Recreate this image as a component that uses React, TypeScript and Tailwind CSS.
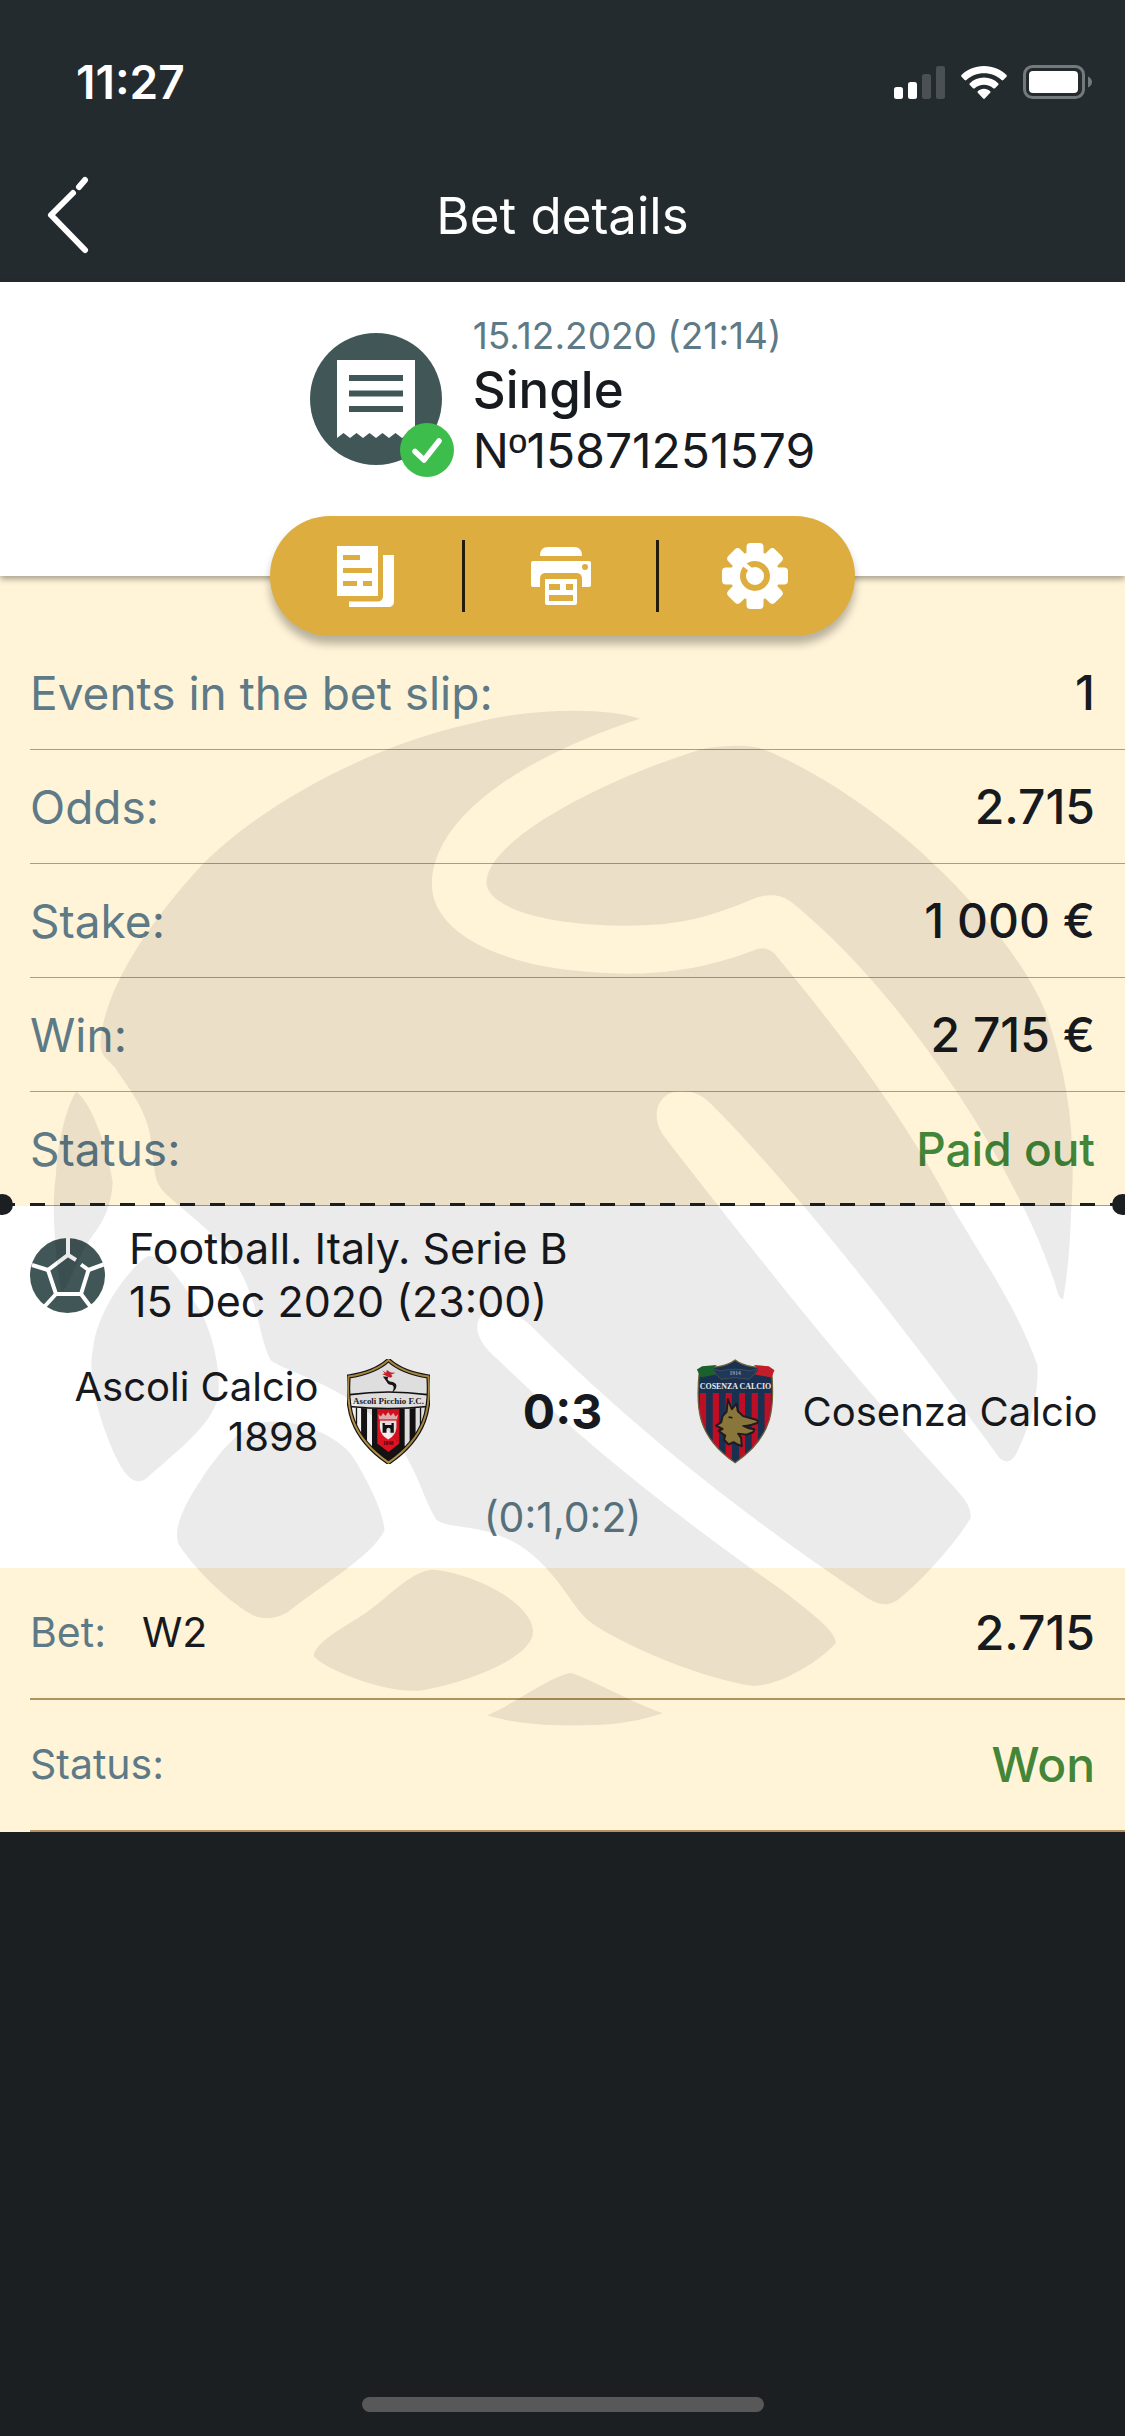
import React from "react";

const slipRows = [
  { label: "Events in the bet slip:", value: "1" },
  { label: "Odds:", value: "2.715" },
  { label: "Stake:", value: "1 000 €" },
  { label: "Win:", value: "2 715 €" },
  { label: "Status:", value: "Paid out", positive: true },
];

function SignalIcon() {
  return (
    <svg viewBox="0 0 51 33" className="h-[33px] w-[51px]" aria-hidden="true">
      <rect x="0" y="21" width="9" height="12" rx="2.5" fill="#fff" />
      <rect x="14" y="16" width="9" height="17" rx="2.5" fill="#fff" />
      <rect x="28" y="8" width="9" height="25" rx="2.5" fill="#4a5053" />
      <rect x="42" y="0" width="9" height="33" rx="2.5" fill="#4a5053" />
    </svg>
  );
}

function WifiIcon() {
  return (
    <svg viewBox="0 0 46 33" className="h-[33px] w-[46px]" aria-hidden="true" fill="#fff">
      <path d="M23 0C32 0 40 3.500 45.500 9C46 9.500 46 10.200 45.500 10.700L42.300 14C41.800 14.500 41.100 14.500 40.600 14C36 9.800 30 7.300 23 7.300S10 9.800 5.400 14C4.900 14.500 4.200 14.500 3.700 14L.5 10.700C0 10.200 0 9.500 .5 9C6 3.500 14 0 23 0Z" />
      <path d="M23 11.500C28.500 11.500 33.500 13.600 37.200 17.200C37.700 17.700 37.700 18.400 37.200 18.900L34 22.200C33.500 22.700 32.800 22.700 32.300 22.200C29.800 20 26.600 18.700 23 18.700S16.200 20 13.700 22.200C13.200 22.700 12.500 22.700 12 22.200L8.800 18.900C8.300 18.400 8.300 17.700 8.800 17.200C12.500 13.600 17.500 11.500 23 11.500Z" />
      <path d="M23 22.800C25.500 22.800 27.600 23.700 29.200 25.200C29.700 25.700 29.700 26.300 29.200 26.800L23.800 32.500C23.300 33 22.700 33 22.200 32.500L16.800 26.800C16.300 26.300 16.300 25.700 16.800 25.200C18.400 23.700 20.500 22.800 23 22.800Z" />
    </svg>
  );
}

function BatteryIcon() {
  return (
    <svg viewBox="0 0 70 34" className="h-[34px] w-[70px]" aria-hidden="true">
      <rect x="1.500" y="1.500" width="59" height="31" rx="8" fill="none" stroke="#74797b" strokeWidth="3" />
      <rect x="6" y="6" width="49" height="22" rx="4" fill="#fff" />
      <path d="M65 11.500C67.500 12.500 69 14.500 69 17S67.500 21.500 65 22.500Z" fill="#74797b" />
    </svg>
  );
}

function ReceiptBadge() {
  return (
    <svg viewBox="0 0 144 144" className="h-[144px] w-[144px] shrink-0" aria-hidden="true">
      <circle cx="66" cy="66" r="66" fill="#415657" />
      <path d="M27 27H105V105L98.500 100L92 105L85.500 100L79 105L72.500 100L66 105L59.500 100L53 105L46.500 100L40 105L33.500 100L27 105Z" fill="#fff" />
      <path d="M39 45H93M39 60.500H93M39 76H93" stroke="#415657" strokeWidth="6" />
      <circle cx="117" cy="117" r="27" fill="#3dbd4b" />
      <path d="M105 118.500L114 127L129 108" fill="none" stroke="#fff" strokeWidth="5.500" strokeLinecap="round" strokeLinejoin="round" />
    </svg>
  );
}

function CopyIcon() {
  return (
    <svg viewBox="0 0 57 61" className="h-[61px] w-[57px]" aria-hidden="true">
      <path fill="#fff" fillRule="evenodd" d="M0 0H41V50H0ZM6 9V14H23V9ZM6 22V27H35V22ZM6 35V40H20V35ZM26 35V40H35V35Z" />
      <path fill="#fff" d="M46 9H57V55C57 59 55 61 51 61H12V55.500H40C44 55.500 46 53.500 46 49.500Z" />
    </svg>
  );
}

function PrinterIcon() {
  return (
    <svg viewBox="0 0 60 58" className="h-[58px] w-[60px]" aria-hidden="true" fill="#fff">
      <path d="M9 9C9 3 12 0 17 0H43C48 0 51 3 51 9Z" />
      <path fillRule="evenodd" d="M2 14H58Q60 14 60 16V38Q60 40 58 40H51V32C51 28 49 26 45 26H15C11 26 9 28 9 32V40H2Q0 40 0 38V16Q0 14 2 14ZM54 17A3 3 0 1 0 54 23A3 3 0 1 0 54 17Z" />
      <path fillRule="evenodd" d="M14 32H46V56Q46 58 44 58H16Q14 58 14 56ZM18 37V43H29V37ZM35 37V43H42V37ZM18 48V54H42V48Z" />
    </svg>
  );
}

function GearIcon() {
  return (
    <svg viewBox="-33 -33 66 66" className="h-[66px] w-[66px]" aria-hidden="true">
      <g fill="#fff">
        <rect x="-8.500" y="-33" width="17" height="66" rx="4" />
        <rect x="-8.500" y="-33" width="17" height="66" rx="4" transform="rotate(90)" />
        <rect x="-8.500" y="-33" width="17" height="66" rx="4" transform="rotate(45)" />
        <rect x="-8.500" y="-33" width="17" height="66" rx="4" transform="rotate(135)" />
        <circle r="24.500" />
      </g>
      <circle r="12" fill="none" stroke="#ddae3f" strokeWidth="6" />
      <path d="M-12.500 -13L-4 -6" stroke="#fff" strokeWidth="4.500" />
    </svg>
  );
}

function FootballIcon() {
  return (
    <svg viewBox="0 0 75 75" className="h-[75px] w-[75px] shrink-0" aria-hidden="true">
      <circle cx="37.500" cy="37.500" r="37.500" fill="#415657" />
      <g fill="none" stroke="#fff" strokeWidth="4">
        <path d="M38 0V17M46 22L38 17L18 32L26 56H51L58.500 32L51 26.500" />
        <path d="M18 32L2 27M58.500 32L73.500 26.500M26 56L15 68M51 56L60 68" />
      </g>
    </svg>
  );
}

function AscoliCrest() {
  const shield = "M207 89C238 118 280 132 328 139C335 230 324 320 207 400C90 320 79 230 86 139C134 132 176 118 207 89Z";
  return (
    <svg viewBox="82 86 250 318" className="h-[105px] w-[83px] shrink-0" role="img" aria-label="Ascoli Picchio F.C.">
      <clipPath id="ascoli-shield">
        <path d={shield} />
      </clipPath>
      <g clipPath="url(#ascoli-shield)">
        <rect x="82" y="86" width="250" height="318" fill="#f1f1f2" />
        <rect x="82" y="228" width="250" height="180" fill="#151213" />
        <path d="M96 232H108V300H96ZM112 234H124V330H112ZM142 236H157V350H142ZM256 236H271V350H256ZM289 234H302V330H289ZM306 232H317V300H306Z" fill="#f1f1f2" />
        <path d="M173 236H240V342L207 368L173 342Z" fill="#e01222" />
        <path d="M90 190Q207 188 324 190V232Q207 242 90 232Z" fill="#f1f1f2" />
        <path d="M90 194Q207 178 324 194M90 230Q207 242 324 230" fill="none" stroke="#151213" strokeWidth="5" />
        <path d="M181 272H231V295Q228 318 206 330Q184 318 181 295Z" fill="#f6eeee" />
        <path d="M178 270L175 252L184 259L190 248L198 257L206 245L214 257L222 248L228 259L237 252L234 270Z" fill="#f3b8b8" stroke="#e01222" strokeWidth="2" />
        <path d="M189 280H196V286H216V280H223V309H213V298Q207 291 201 298V309H189Z" fill="#151213" />
        <text x="206" y="348" textAnchor="middle" fontFamily="Liberation Serif, serif" fontWeight="700" fontSize="16" fill="#3a0508">1898</text>
      </g>
      <path d="M188 121L200 128L202 119L214 127L228 128L214 134Q224 139 212 143Q196 134 188 132L196 129Z" fill="#d8232c" />
      <path d="M190 139L207 140Q200 149 211 154Q231 156 231 168Q230 181 217 188Q228 171 218 165Q205 165 202 156Q196 147 190 139Z" fill="#1a1717" />
      <text x="207" y="221" textAnchor="middle" fontFamily="Liberation Serif, serif" fontWeight="700" fontSize="27" fill="#262223">Ascoli Picchio F.C.</text>
      <path d={shield} fill="none" stroke="#151213" strokeWidth="13" />
      <path d={shield} fill="none" stroke="#b09348" strokeWidth="6" />
    </svg>
  );
}

function CosenzaCrest() {
  const shield = "M198 89C210 98 224 105 250 109L308 118C318 230 316 320 198 400C80 320 78 230 90 118L146 109C172 105 186 98 198 89Z";
  return (
    <svg viewBox="80 86 238 318" className="h-[105px] w-[79px] shrink-0" role="img" aria-label="Cosenza Calcio">
      <clipPath id="cosenza-shield">
        <path d={shield} />
      </clipPath>
      <g clipPath="url(#cosenza-shield)">
        <rect x="80" y="86" width="238" height="318" fill="#1d3557" />
        <path d="M91 189H110V400H91ZM130 189H149V400H130ZM169 189H188V400H169ZM210 189H228V400H210ZM248 189H267V400H248ZM287 189H306V400H287Z" fill="#cc1029" />
      </g>
      <path d={shield} fill="none" stroke="#7a6a42" strokeWidth="4" />
      <path d="M82 118L98 108L142 104L130 118L140 133L94 142Z" fill="#1d6a30" />
      <path d="M317 120L300 108L255 104L268 118L258 133L308 142Z" fill="#d3202c" />
      <path d="M131 116L154 122Q198 112 242 122L265 116L256 133L240 147Q198 138 156 147L140 133Z" fill="#223c60" stroke="#56635f" strokeWidth="2" />
      <text x="198" y="136" textAnchor="middle" fontFamily="Liberation Serif, serif" fontWeight="700" fontSize="17" fill="#a7afb5">1914</text>
      <text x="199" y="177" textAnchor="middle" fontFamily="Liberation Serif, serif" fontWeight="700" fontSize="24" fill="#fff">COSENZA CALCIO</text>
      <path d="M176 208L188 238L202 221L206 244L222 259L262 270Q269 274 265 280L242 287L226 290L240 296L256 299L252 308L232 315L207 312L216 325L218 350L206 345L193 338L178 345L164 330L168 318L148 304L160 298L140 288L156 277L160 259L172 246Z" fill="#94803f" stroke="#241c20" strokeWidth="6" strokeLinejoin="round" />
      <path d="M178 262L190 264M220 289L244 287" stroke="#241c20" strokeWidth="5" />
    </svg>
  );
}

function Watermark() {
  return (
    <svg
      viewBox="0 -145 1568 1751"
      preserveAspectRatio="xMidYMin meet"
      className="pointer-events-none absolute inset-x-0 top-0 w-full"
      aria-hidden="true"
      fill="#000"
      fillOpacity="0.08"
    >
      <path d="M892 54C850 38 740 38 660 60C520 90 370 170 284 255C200 345 142 440 140 508C140 525 152 530 160 540C180 570 205 600 210 640C216 680 214 690 222 705C232 725 300 765 330 815C362 870 360 915 377 948C400 965 470 980 530 1035C580 1085 588 1140 608 1170C625 1186 690 1172 745 1222C790 1262 800 1300 830 1318C880 1350 980 1392 1050 1402C1085 1402 1140 1370 1165 1342C1165 1325 1130 1300 1095 1272C960 1178 820 1070 695 948C655 915 662 890 677 880C700 872 722 884 740 900C900 1060 1060 1180 1205 1277C1228 1293 1242 1290 1255 1279C1290 1250 1330 1205 1353 1168C1353 1150 1345 1142 1330 1125C1200 985 1060 810 925 635C905 607 918 575 945 573C965 572 978 578 990 590C1120 720 1280 930 1390 1080C1400 1095 1412 1090 1418 1075C1438 1035 1448 990 1446 955C1420 880 1375 815 1325 731C1260 612 1190 515 1080 382C1070 372 1060 372 1050 377C950 415 870 412 800 405C680 392 602 345 602 285C602 195 720 110 892 54Z" />
      <path d="M1020 92C1040 91 1052 92 1067 98C1160 135 1260 215 1300 255C1370 320 1440 410 1460 470C1490 560 1500 640 1493 740C1491 790 1489 820 1482 862C1478 866 1474 855 1470 840C1440 750 1370 610 1250 460C1190 385 1140 340 1105 311C1090 298 1070 297 1050 305C980 335 930 345 850 342C740 338 678 312 678 282C678 230 810 150 975 97Q998 92 1020 92Z" />
      <path d="M106 574C125 585 150 650 157 700C155 740 140 760 125 780C105 810 95 850 86 852C80 830 70 740 78 690C80 640 95 590 106 574Z" />
      <path d="M205 803C230 800 260 850 280 880C300 920 308 970 304 1000C295 1040 240 1080 205 1112C190 1125 175 1110 165 1090C140 1040 120 970 130 930C135 880 180 820 205 803Z" />
      <path d="M372 1034C420 1030 470 1055 490 1080C510 1110 535 1160 536 1185C520 1220 450 1260 400 1300C380 1310 365 1310 350 1302C310 1280 265 1230 249 1205C240 1180 260 1145 280 1115C300 1085 335 1035 372 1034Z" />
      <path d="M605 1240C660 1245 740 1285 743 1325C745 1360 660 1395 590 1408C540 1415 450 1378 437 1360C440 1340 480 1320 510 1300C545 1275 575 1240 605 1240Z" />
      <path d="M795 1384C815 1388 880 1425 924 1440C880 1455 840 1457 795 1457C740 1457 700 1450 679 1443C720 1425 765 1390 795 1384Z" />
    </svg>
  );
}

export default function App() {
  return (
    <div className="flex min-h-screen flex-col bg-[#1b1f22] font-['Inter','Liberation_Sans',sans-serif] text-[#171a1e]">
      <header className="bg-[#242b2e] text-white">
        <div className="flex h-[132px] items-center justify-between pt-8 pr-8 pl-19">
          <span className="text-[46px] leading-none font-semibold">11:27</span>
          <div className="flex items-center gap-4">
            <SignalIcon />
            <WifiIcon />
            <BatteryIcon />
          </div>
        </div>
        <div className="grid h-[150px] grid-cols-[1fr_auto_1fr] items-center px-11 pt-4">
          <button type="button" aria-label="Back" className="h-20 w-12">
            <svg viewBox="0 0 48 80" className="h-20 w-12" aria-hidden="true" fill="none" stroke="#fff" strokeWidth="6" strokeLinecap="round">
              <path d="M41 5L35 12" />
              <path d="M29 18L7 40L41 75" strokeLinejoin="round" />
            </svg>
          </button>
          <h1 className="text-[51px] leading-none">Bet details</h1>
        </div>
      </header>

      <main>
        <section className="relative z-[1] flex h-[294px] justify-center gap-[19px] bg-white pt-6 shadow-[0_3px_6px_rgba(0,0,0,0.35)]">
          <div className="pt-[27px]">
            <ReceiptBadge />
          </div>
          <div>
            <p className="pt-1 text-[37px] leading-[52px] text-[#5d7a86]">15.12.2020 (21:14)</p>
            <p className="text-[51px] leading-[56px] font-medium">Single</p>
            <p className="text-[48px] leading-[66px]">
              N<span className="font-['Liberation_Sans',sans-serif]">º</span>15871251579
            </p>
          </div>
        </section>

        <nav aria-label="Bet actions" className="relative z-10 -my-15 flex justify-center">
          <div className="flex h-30 w-[52%] items-center divide-x-3 divide-[#241a08] rounded-full bg-[#ddae3f] pr-1 shadow-[0_8px_9px_rgba(0,0,0,0.28)]">
            <button type="button" aria-label="Copy bet slip" className="flex h-18 flex-1 items-center justify-center">
              <CopyIcon />
            </button>
            <button type="button" aria-label="Print" className="flex h-18 flex-1 items-center justify-center">
              <PrinterIcon />
            </button>
            <button type="button" aria-label="Settings" className="flex h-18 flex-1 items-center justify-center">
              <GearIcon />
            </button>
          </div>
        </nav>

        <section className="relative overflow-hidden bg-[#fff4d8] pt-15">
          <dl className="pl-[30px]">
            {slipRows.map((row) => (
              <div key={row.label} className="flex h-[114px] items-center justify-between border-b border-[#b89c63] pt-px pr-[30px]">
                <dt className="text-[46px] text-[#5d7a86]">{row.label}</dt>
                <dd className={row.positive ? "text-[46px] font-medium text-[#438638]" : "text-[48px] font-medium"}>{row.value}</dd>
              </div>
            ))}
          </dl>

          <article className="relative bg-white pt-4 pb-[26px]">
            <div className="absolute inset-x-0 -top-[3px] h-[3px] bg-[repeating-linear-gradient(90deg,#1b1f22_0_15px,transparent_15px_30px)]" />
            <div className="absolute -top-3 -left-2 size-[21px] rounded-full bg-[#1b1f22]" />
            <div className="absolute -top-3 -right-2 size-[21px] rounded-full bg-[#1b1f22]" />
            <header className="flex items-center gap-6 pl-[30px] text-[43px] leading-[53px]">
              <FootballIcon />
              <div>
                <h2>Football. Italy. Serie B</h2>
                <p>15 Dec 2020 (23:00)</p>
              </div>
            </header>
            <div className="mt-[31px] grid grid-cols-[minmax(0,1fr)_266px_minmax(0,1fr)] items-center text-[40px] leading-[50px]">
              <div className="flex items-center justify-end gap-7 pl-6">
                <span className="text-right">Ascoli Calcio<br />1898</span>
                <AscoliCrest />
              </div>
              <strong className="text-center text-[48px] font-bold">0:3</strong>
              <div className="flex items-center gap-7">
                <CosenzaCrest />
                <span className="whitespace-nowrap">Cosenza Calcio</span>
              </div>
            </div>
            <p className="mt-7 text-center text-[41px] leading-[50px] text-[#5d7a86]">(0:1,0:2)</p>
          </article>

          <dl className="pl-[30px] text-[41px]">
            <div className="flex h-[132px] items-center border-b-2 border-[#b1935b] pr-[30px]">
              <dt className="mr-9 text-[#5d7a86]">Bet:</dt>
              <dd className="flex-1">W2</dd>
              <dd className="text-[48px] font-medium">2.715</dd>
            </div>
            <div className="flex h-[132px] items-center justify-between border-b-2 border-[#b1935b] pr-[30px]">
              <dt className="text-[#5d7a86]">Status:</dt>
              <dd className="text-[48px] font-medium text-[#438638]">Won</dd>
            </div>
          </dl>
          <Watermark />
        </section>
      </main>

      <div className="mt-auto flex justify-center pb-6">
        <div className="h-[15px] w-[402px] rounded-full bg-[#585858]" />
      </div>
    </div>
  );
}
